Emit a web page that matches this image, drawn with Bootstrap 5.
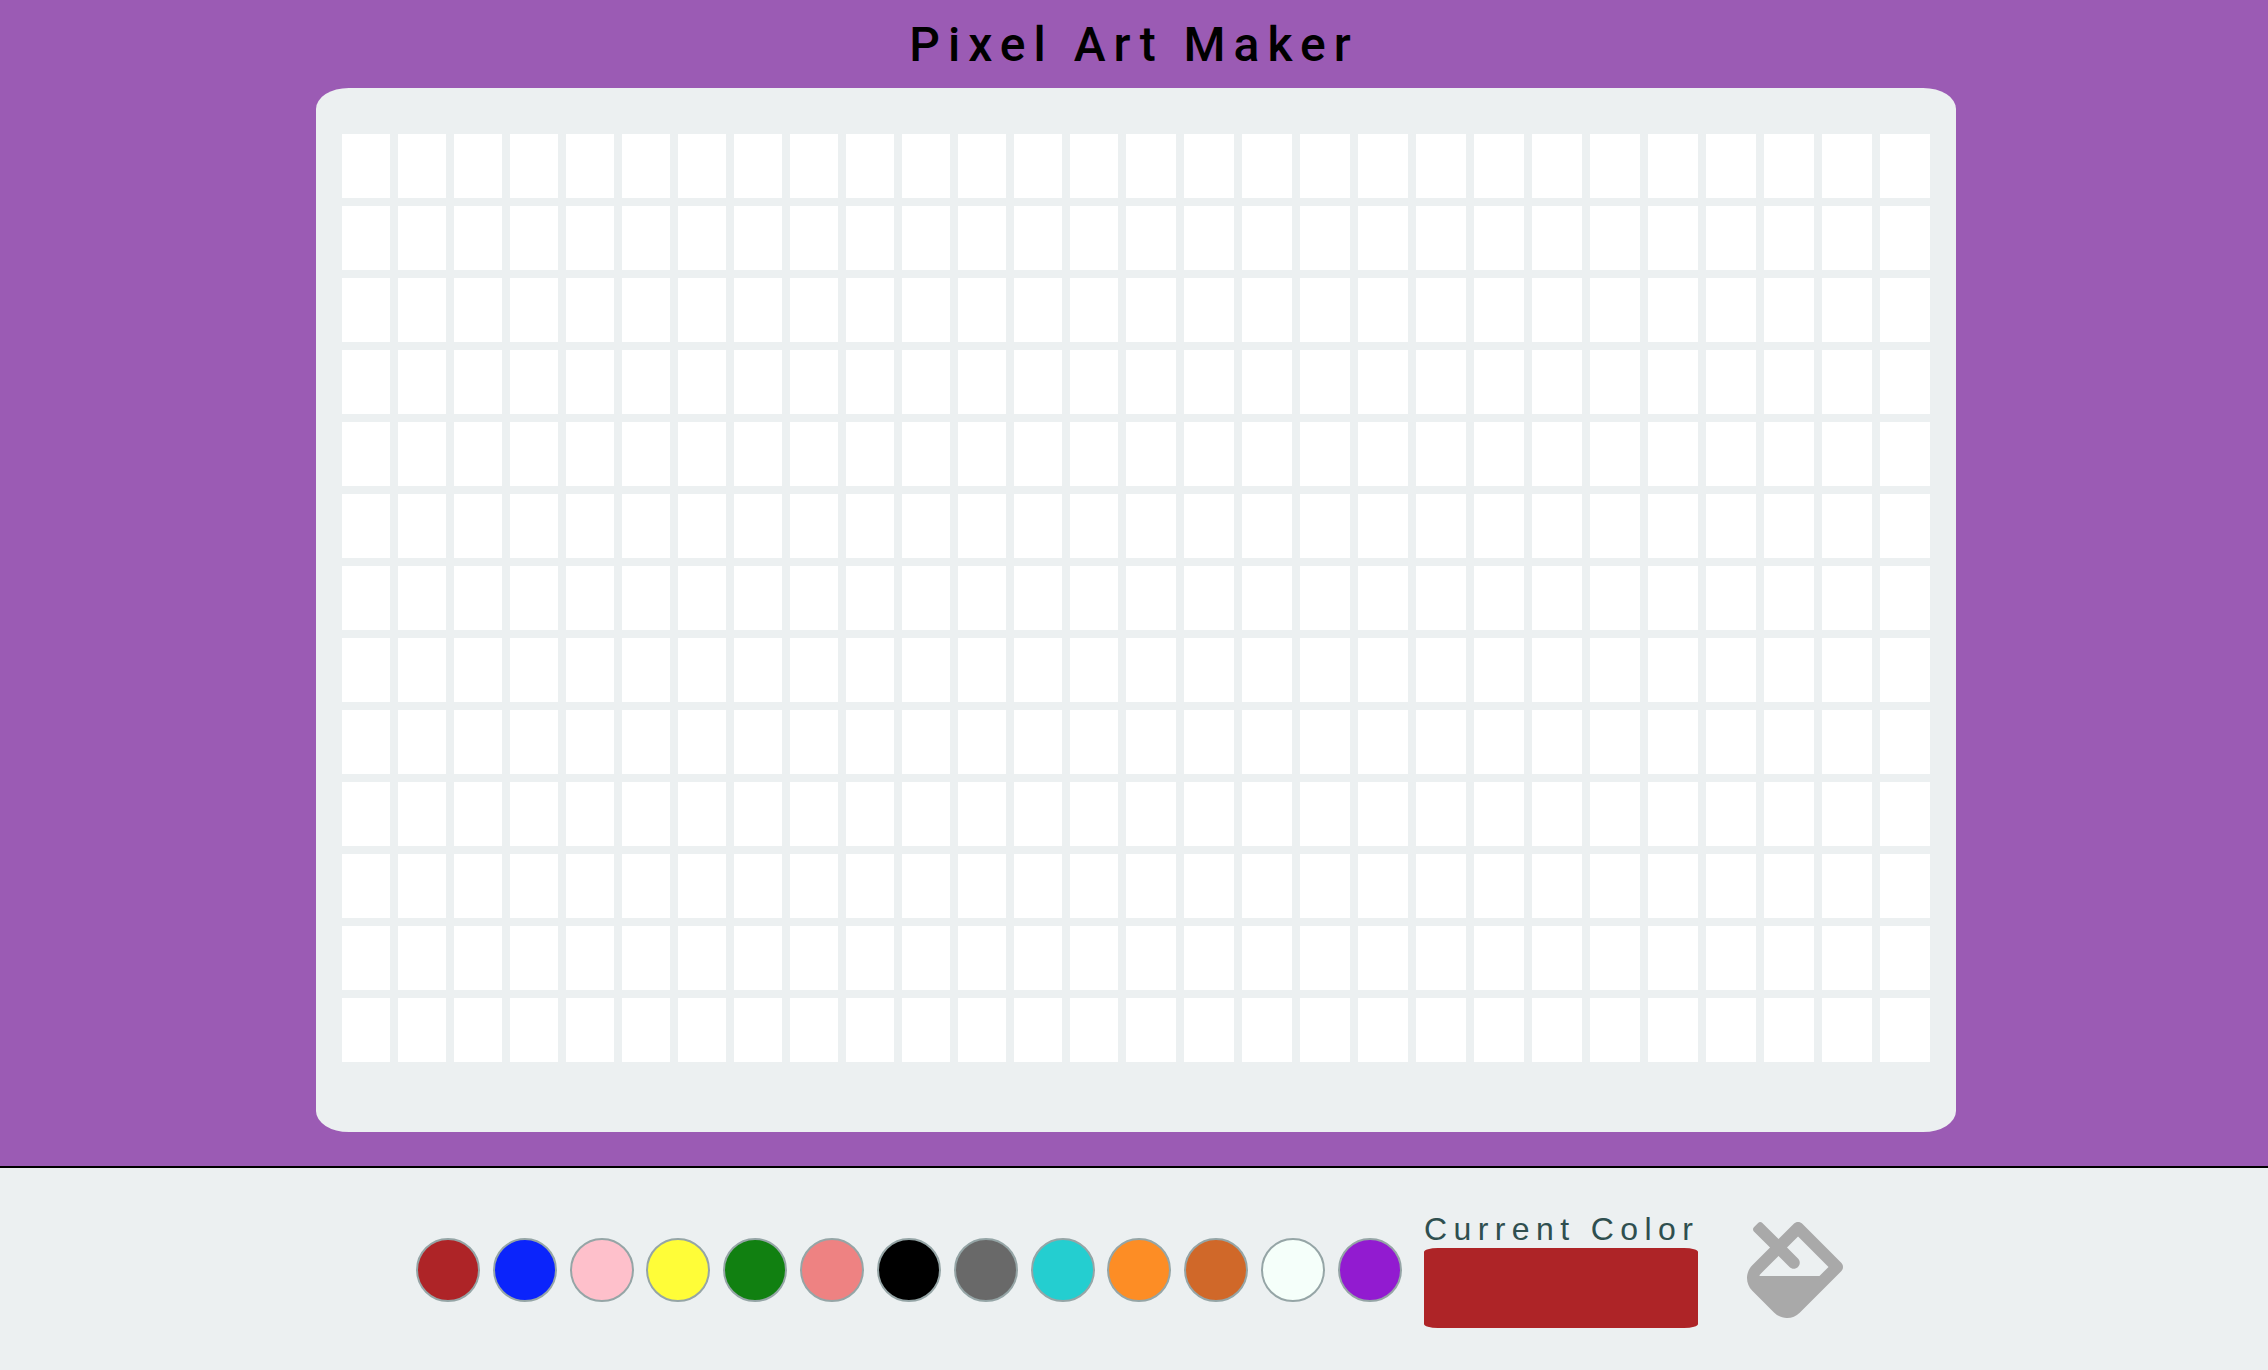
<!DOCTYPE html>
<html lang="en">
<head>
<meta charset="utf-8">
<meta name="viewport" content="width=device-width, initial-scale=1">
<title>Pixel Art Maker</title>
<link rel="stylesheet" href="https://cdn.jsdelivr.net/npm/bootstrap@5.3.0/dist/css/bootstrap.min.css">
<style>
  body { background: #9b5bb4; color: #000; }
  .site-title {
    font: 500 48px/60px Roboto, sans-serif;
    letter-spacing: 8px;
    padding: 15px 0 13px;
  }
  .board-area { padding: 0 16px; }
  .board {
    background: #ecf0f1;
    border-radius: 2%;
    padding: 46px 26px 70px;
  }
  .pixel-grid {
    display: grid;
    grid-template-columns: repeat(14, 48fr) repeat(14, 50fr);
    grid-auto-rows: 64px;
    gap: 8px;
  }
  .pixel { background: #fff; border: 0; padding: 0; min-width: 0; }
  .toolbar {
    background: #ecf0f1;
    border-top: 2px solid #000;
    margin-top: 34px;
    padding: 44px 16px 42px;
  }
  .palette { flex: 0 1 986px; gap: 8px; }
  .swatch {
    width: 64px;
    height: 64px;
    border: 2px solid #95a5a6;
    border-radius: 50%;
    padding: 0;
  }
  .current { width: 274px; margin-left: 22px; }
  .current-label {
    font: 32px/34px "Liberation Sans", sans-serif;
    letter-spacing: 0.2em;
    padding-bottom: 2px;
    color: #2f4f4f;
  }
  .current-box { display: block; height: 80px; border-radius: 5%; }
  .fill-tool { margin: 0 9px 0 49px; padding: 0; border: 0; background: none; color: #a9a9a9; }
  .fill-tool svg { display: block; width: 96px; height: 96px; }
  .c-red { background: #ae2427; }
  .c-blue { background: #0b24fb; }
  .c-pink { background: #fec0cb; }
  .c-yellow { background: #fffd38; }
  .c-green { background: #118011; }
  .c-coral { background: #ee8282; }
  .c-black { background: #000; }
  .c-gray { background: #696969; }
  .c-turquoise { background: #24ced0; }
  .c-orange { background: #fd8d25; }
  .c-chocolate { background: #d06829; }
  .c-mint { background: #f5fffa; }
  .c-violet { background: #921bd0; }
  @media (min-width: 1400px) {
    .board-area { padding: 0 312px 0 316px; }
  }
</style>
<script src="https://cdn.jsdelivr.net/npm/bootstrap@5.3.0/dist/js/bootstrap.bundle.min.js"></script>
</head>
<body class="d-flex flex-column min-vh-100">
  <header>
    <h1 class="site-title text-center m-0">Pixel Art Maker</h1>
  </header>

  <main class="board-area">
    <div class="board">
      <div class="pixel-grid" id="grid"></div>
    </div>
  </main>

  <footer class="toolbar flex-grow-1 d-flex flex-wrap flex-xl-nowrap justify-content-center align-items-center">
    <div class="palette d-flex flex-wrap flex-xl-nowrap justify-content-between" id="palette">
      <button type="button" class="swatch c-red" aria-label="Red"></button>
      <button type="button" class="swatch c-blue" aria-label="Blue"></button>
      <button type="button" class="swatch c-pink" aria-label="Pink"></button>
      <button type="button" class="swatch c-yellow" aria-label="Yellow"></button>
      <button type="button" class="swatch c-green" aria-label="Green"></button>
      <button type="button" class="swatch c-coral" aria-label="Coral"></button>
      <button type="button" class="swatch c-black" aria-label="Black"></button>
      <button type="button" class="swatch c-gray" aria-label="Gray"></button>
      <button type="button" class="swatch c-turquoise" aria-label="Turquoise"></button>
      <button type="button" class="swatch c-orange" aria-label="Orange"></button>
      <button type="button" class="swatch c-chocolate" aria-label="Chocolate"></button>
      <button type="button" class="swatch c-mint" aria-label="Mint"></button>
      <button type="button" class="swatch c-violet" aria-label="Violet"></button>
    </div>
    <div class="current flex-shrink-0">
      <div class="current-label text-nowrap">Current Color</div>
      <span class="current-box c-red" id="current"></span>
    </div>
    <button type="button" class="fill-tool" id="fill" aria-label="Fill">
      <svg viewBox="0 0 512 512" fill="currentColor" aria-hidden="true"><path d="M502.63 217.06L294.94 9.37C288.69 3.12 280.5 0 272.31 0s-16.38 3.12-22.62 9.37l-81.58 81.58L81.93 4.77c-6.24-6.25-16.38-6.25-22.62 0L36.69 27.38c-6.24 6.25-6.24 16.38 0 22.63l86.19 86.18-94.76 94.76c-37.49 37.49-37.49 98.26 0 135.75l117.19 117.19c18.75 18.74 43.31 28.12 67.87 28.12 24.57 0 49.13-9.37 67.88-28.12l221.57-221.57c12.49-12.5 12.49-32.76 0-45.26zm-116.22 70.97H65.93c1.36-3.84 3.57-7.98 7.43-11.83l13.15-13.15 81.61-81.61 58.61 58.6c12.49 12.49 32.75 12.49 45.24 0 12.49-12.49 12.49-32.75 0-45.24l-58.61-58.6 58.95-58.95 162.45 162.44-48.35 48.34z"/></svg>
    </button>
  </footer>

<script>
  const grid = document.getElementById('grid');
  const current = document.getElementById('current');
  const rows = 13, columns = 28;

  for (let r = 1; r <= rows; r++) {
    for (let c = 1; c <= columns; c++) {
      const pixel = document.createElement('button');
      pixel.type = 'button';
      pixel.className = 'pixel';
      pixel.setAttribute('aria-label', 'Row ' + r + ', column ' + c);
      grid.append(pixel);
    }
  }

  const brush = () => getComputedStyle(current).backgroundColor;

  grid.addEventListener('click', e => {
    if (e.target.classList.contains('pixel')) e.target.style.background = brush();
  });
  document.getElementById('palette').addEventListener('click', e => {
    if (e.target.classList.contains('swatch')) {
      current.style.background = getComputedStyle(e.target).backgroundColor;
    }
  });
  document.getElementById('fill').addEventListener('click', () => {
    grid.querySelectorAll('.pixel').forEach(p => { p.style.background = brush(); });
  });
</script>
</body>
</html>
